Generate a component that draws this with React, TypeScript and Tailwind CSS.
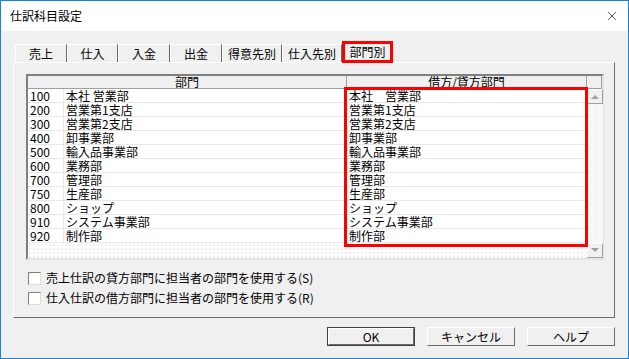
import { X } from "lucide-react";

const rows = [
  ["100", "本社 営業部", "本社　営業部"],
  ["200", "営業第1支店", "営業第1支店"],
  ["300", "営業第2支店", "営業第2支店"],
  ["400", "卸事業部", "卸事業部"],
  ["500", "輸入品事業部", "輸入品事業部"],
  ["600", "業務部", "業務部"],
  ["700", "管理部", "管理部"],
  ["750", "生産部", "生産部"],
  ["800", "ショップ", "ショップ"],
  ["910", "システム事業部", "システム事業部"],
  ["920", "制作部", "制作部"],
];

const tabs = [
  { label: "売上", w: "w-[52px]" },
  { label: "仕入", w: "w-[51px]" },
  { label: "入金", w: "w-[52px]" },
  { label: "出金", w: "w-[52px]" },
  { label: "得意先別", w: "w-[60px]" },
  { label: "仕入先別", w: "w-[60px]" },
];

function Check({ label }: { label: string }) {
  return (
    <div className="flex items-center h-[20px]">
      <span className="w-[13px] h-[13px] bg-white border border-t-[#808080] border-l-[#808080] border-r-[#dcdcdc] border-b-[#dcdcdc] shrink-0" />
      <span className="ml-[5px] text-[12px] leading-[14px] text-black">{label}</span>
    </div>
  );
}

function Btn({ label, primary }: { label: string; primary?: boolean }) {
  return (
    <div className={`w-[88px] h-[19px] ${primary ? "border border-[#404040]" : ""}`}>
      <div className="w-full h-full bg-[#f0f0f0] border border-t-white border-l-white border-r-[#696969] border-b-[#696969] flex items-center justify-center text-[12px] leading-[14px] text-black">
        {label}
      </div>
    </div>
  );
}

function Arrow({ up }: { up?: boolean }) {
  return (
    <div className="w-[16px] h-[15px] bg-[#f0f0f0] border border-t-white border-l-white border-r-[#a0a0a0] border-b-[#a0a0a0] flex items-center justify-center">
      <svg width="8" height="5" viewBox="0 0 8 5">
        <path d={up ? "M0 5 L4 1 L8 5 Z" : "M0 0 L4 4 L8 0 Z"} fill="#a0a0a0" />
      </svg>
    </div>
  );
}

export default function App() {
  return (
    <div
      className="w-[629px] h-[359px] border border-[#1883d7] bg-[#f0f0f0] flex flex-col overflow-hidden"
      style={{ fontFamily: '"Noto Sans CJK JP", "Liberation Sans", sans-serif' }}
    >
      <div className="h-[30px] bg-white flex items-center justify-between pl-[9px] pr-[9px] shrink-0">
        <span className="text-[12px] text-black">仕訳科目設定</span>
        <X size={14} strokeWidth={1.2} className="text-black" />
      </div>

      <div className="flex-1 flex flex-col px-[12px]">
        {/* tabs */}
        <div className="flex items-end h-[31px] pl-[2px] relative z-10">
          {tabs.map((t) => (
            <div
              key={t.label}
              className={`${t.w} h-[18px] border-t border-l border-t-white border-l-white border-r border-r-[#696969] flex items-center justify-center text-[12px] leading-[14px] text-black`}
            >
              {t.label}
            </div>
          ))}
          <div className="w-[51px] h-[22px] -mb-px bg-[#f0f0f0] border-[3px] border-[#ff0000] flex items-center justify-center text-[12px] leading-[14px] text-black">
            部門別
          </div>
        </div>

        {/* panel */}
        <div className="w-[602px] h-[256px] border border-t-white border-l-white border-r-[#696969] border-b-[#696969] pt-[11px] pl-[12px] flex flex-col">
          <div className="w-[578px] h-[186px] border-2 border-t-[#808080] border-l-[#808080] border-r-[#e3e3e3] border-b-[#e3e3e3] bg-white flex flex-col relative">
            {/* header */}
            <div className="flex h-[13px] shrink-0 text-[12px] leading-[12px] text-black">
              <div className="w-[319px] bg-[#f0f0f0] border-r border-b border-r-[#a0a0a0] border-b-[#a0a0a0] flex items-center justify-center">
                部門
              </div>
              <div className="w-[240px] bg-[#f0f0f0] border-r border-b border-r-[#a0a0a0] border-b-[#a0a0a0] flex items-center justify-center">
                借方/貸方部門
              </div>
              <div className="flex-1 bg-[#f0f0f0] border-r border-b border-r-[#a0a0a0] border-b-[#a0a0a0]" />
            </div>
            <div className="flex flex-1">
              <div className="w-[559px] flex flex-col">
                {rows.map(([code, name, dept]) => (
                  <div key={code} className="flex h-[14px] border-b border-[#e8e8e8] text-[12px] leading-[13px] text-black">
                    <div className="w-[36px] pl-[2px] flex items-center border-r border-[#e8e8e8]">{code}</div>
                    <div className="w-[283px] pl-[2px] flex items-center border-r border-[#e8e8e8] whitespace-pre">{name}</div>
                    <div className="w-[240px] pl-[2px] flex items-center whitespace-pre">{dept}</div>
                  </div>
                ))}
                <div className="flex-1 bg-[radial-gradient(#dcdcdc_0.6px,transparent_0.8px)] bg-[length:4px_4px]" />
              </div>
              <div className="flex-1 flex flex-col bg-[repeating-conic-gradient(#f0f0f0_0_25%,#ffffff_0_50%)] bg-[length:2px_2px]">
                <Arrow up />
                <div className="flex-1" />
                <Arrow />
              </div>
            </div>
            {/* highlight */}
            <div className="absolute left-[316px] top-[11px] w-[244px] h-[160px] border-[3px] border-[#ff0000] pointer-events-none" />
          </div>

          <div className="mt-[8px] pl-[2px] flex flex-col">
            <Check label="売上仕訳の貸方部門に担当者の部門を使用する(S)" />
            <Check label="仕入仕訳の借方部門に担当者の部門を使用する(R)" />
          </div>
        </div>

        {/* buttons */}
        <div className="flex justify-end gap-[12px] mt-[9px] pr-[1px]">
          <Btn label="OK" primary />
          <Btn label="キャンセル" />
          <Btn label="ヘルプ" />
        </div>
      </div>
    </div>
  );
}
